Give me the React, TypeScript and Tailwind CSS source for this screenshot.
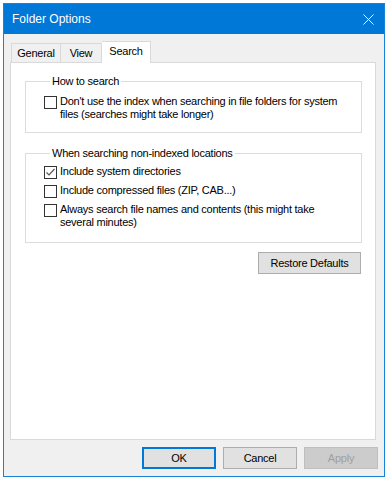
import React from 'react';

const font = { fontFamily: '"Liberation Sans", Arial, sans-serif' };

const Check: React.FC<{ checked?: boolean }> = ({ checked }) => (
  <span className="mt-[1px] flex h-[13px] w-[13px] shrink-0 items-center justify-center border border-[#333333] bg-white">
    {checked && (
      <svg width="11" height="11" viewBox="0 0 11 11">
        <path d="M1.5 5.5 L4 8 L9.5 2" fill="none" stroke="#555" strokeWidth="1.2" />
      </svg>
    )}
  </span>
);

const Option: React.FC<{ checked?: boolean; children: React.ReactNode }> = ({ checked, children }) => (
  <label className="flex items-start gap-[3px] leading-[13px]">
    <Check checked={checked} />
    <span className="max-w-[286px]">{children}</span>
  </label>
);

const Group: React.FC<{ title: string; children: React.ReactNode; bottom: string }> = ({ title, children, bottom }) => (
  <fieldset className={`border border-[#dcdcdc] pl-[18px] pr-[4px] ${bottom}`}>
    <legend className="ml-[6px] px-[2px] leading-[14px]">{title}</legend>
    {children}
  </fieldset>
);

const Btn: React.FC<{ children: React.ReactNode; primary?: boolean; disabled?: boolean }> = ({ children, primary, disabled }) => (
  <button
    className={`flex h-[22px] w-[74px] items-center justify-center ${
      primary
        ? 'border-2 border-[#0078d7] bg-[#e1e1e1] text-black'
        : disabled
        ? 'border border-[#bfbfbf] bg-[#cccccc] text-[#a0a0a0]'
        : 'border border-[#adadad] bg-[#e1e1e1] text-black'
    }`}
  >
    {children}
  </button>
);

export default function App() {
  return (
    <div className="h-[480px] w-[388px] bg-white p-[3px] text-[11px] tracking-[-0.25px] text-black" style={font}>
      <div className="flex h-[474px] flex-col border border-[#1783d6] bg-[#f0f0f0]">
        {/* Title bar */}
        <div className="flex h-[30px] items-center justify-between bg-[#0078d7] pl-[8px] pr-[10px] text-white">
          <span className="text-[12px] tracking-normal">Folder Options</span>
          <svg width="11" height="11" viewBox="0 0 11 11">
            <path d="M0.5 0.5 L10.5 10.5 M10.5 0.5 L0.5 10.5" stroke="white" strokeWidth="1" />
          </svg>
        </div>

        {/* Tabs */}
        <div className="ml-[6px] mr-[8px] mt-[7px] flex flex-1 flex-col">
          <div className="relative z-10 flex h-[21px] items-end pl-[1px]">
            <div className="flex h-[19px] w-[50px] items-center justify-center border border-b-0 border-[#d9d9d9] bg-[#f0f0f0] pt-[1px]">General</div>
            <div className="flex h-[19px] w-[41px] items-center justify-center border border-b-0 border-l-0 border-[#d9d9d9] bg-[#f0f0f0] pt-[1px]">View</div>
            <div className="-mb-[1px] flex h-[22px] w-[49px] items-center justify-center border border-b-0 border-l-0 border-[#d9d9d9] bg-white pb-[2px]">Search</div>
          </div>
          <div className="flex flex-1 flex-col border border-[#d9d9d9] bg-white pl-[14px] pr-[13px] pt-[11px]">
            <Group title="How to search" bottom="pb-[11px]">
              <div className="mt-[7px]">
                <Option>Don't use the index when searching in file folders for system files (searches might take longer)</Option>
              </div>
            </Group>
            <div className="h-[13px] shrink-0" />
            <Group title="When searching non-indexed locations" bottom="pb-[13px]">
              <div className="mt-[5px] flex flex-col gap-[5px]">
                <Option checked>Include system directories</Option>
                <Option>Include compressed files (ZIP, CAB...)</Option>
                <Option>Always search file names and contents (this might take several minutes)</Option>
              </div>
            </Group>
            <div className="mt-[9px] flex justify-end pr-[1px]">
              <button className="flex h-[22px] w-[103px] items-center justify-center border border-[#adadad] bg-[#e1e1e1]">Restore Defaults</button>
            </div>
          </div>
        </div>

        {/* Footer buttons */}
        <div className="flex items-center justify-end gap-[7px] pb-[7px] pr-[6px] pt-[7px]">
          <Btn primary>OK</Btn>
          <Btn>Cancel</Btn>
          <Btn disabled>Apply</Btn>
        </div>
      </div>
    </div>
  );
}
